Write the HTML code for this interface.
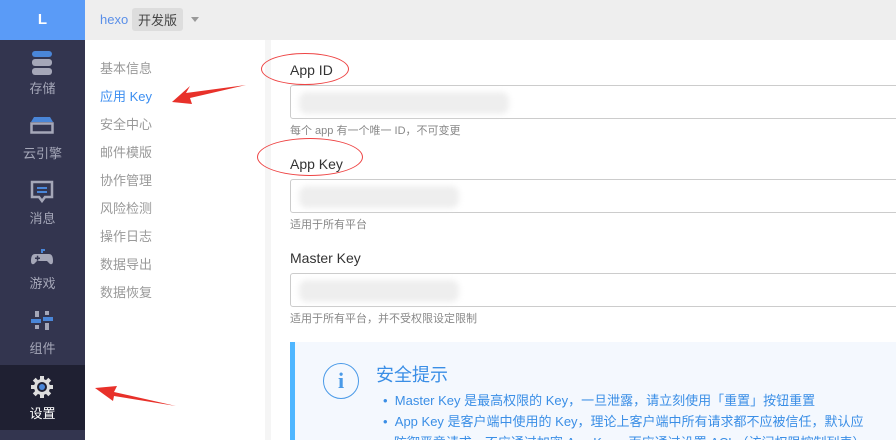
<!DOCTYPE html><html><head><meta charset="utf-8"><style>
*{margin:0;padding:0;box-sizing:border-box}
html,body{width:896px;height:440px;overflow:hidden}
body{position:relative;background:#fff;font-family:"Liberation Sans","Noto Sans CJK SC",sans-serif}
.side{position:absolute;left:0;top:0;width:85px;height:440px;background:#33354f}
.logo{height:40px;background:#5a9bf7;color:#fff;font-weight:bold;font-size:15px;text-align:center;line-height:40px}
.it{position:absolute;left:0;width:85px;height:65px;text-align:center;color:#a5a7b8;font-size:13px}
.it svg{position:absolute;left:30px;top:10px}
.it span{position:absolute;left:0;right:0;top:38px}
.top{position:absolute;left:85px;top:0;right:0;height:40px;background:#eee}
.nav{position:absolute;left:100px;top:55px;font-size:13px;color:#999;line-height:28px}
.strip{position:absolute;left:265px;top:40px;width:6px;height:400px;background:#f5f5f5}
.lbl{position:absolute;left:290px;font-size:14px;color:#333}
.inp{position:absolute;left:290px;width:620px;height:34px;border:1px solid #ccc;border-radius:3px}
.blur{position:absolute;left:8px;top:6px;height:22px;background:#eee;border-radius:8px;filter:blur(3px)}
.help{position:absolute;left:290px;font-size:11px;color:#888}
.ov{position:absolute;border:1px solid #e44;border-radius:50%}
</style></head><body>
<div class="side"><div class="logo">L</div>
<div class="it" style="top:40px"><svg width="24" height="26"><rect x="2" y="1" width="20" height="6" rx="3" fill="#4a86d8"/><rect x="2" y="9" width="20" height="7" rx="3" fill="#a5a7b8"/><rect x="2" y="18" width="20" height="7" rx="3" fill="#a5a7b8"/></svg><span>存储</span></div>
<div class="it" style="top:105px"><svg width="24" height="26"><path d="M4 2h16l3 5H1z" fill="#4a86d8"/><rect x="1.5" y="8.5" width="21" height="9" fill="none" stroke="#a5a7b8" stroke-width="2.5"/></svg><span>云引擎</span></div>
<div class="it" style="top:170px"><svg width="24" height="26"><path d="M2 2h20v15h-7l-3 4-3-4H2z" fill="none" stroke="#a5a7b8" stroke-width="2.5"/><rect x="7" y="7" width="10" height="2" fill="#4a86d8"/><rect x="7" y="11" width="10" height="2" fill="#4a86d8"/></svg><span>消息</span></div>
<div class="it" style="top:235px"><svg width="24" height="26"><path d="M12 8v-3h3" stroke="#4a86d8" stroke-width="2" fill="none"/><path d="M5 9h14q4 0 4 7q0 4-3 3l-3-3H7l-3 3q-3 1-3-3q0-7 4-7z" fill="#a5a7b8"/><rect x="5" y="12.5" width="5" height="1.5" fill="#33354f"/><rect x="6.8" y="10.7" width="1.5" height="5" fill="#33354f"/></svg><span>游戏</span></div>
<div class="it" style="top:300px"><svg width="24" height="26"><rect x="5" y="1" width="4" height="6" fill="#a5a7b8"/><rect x="15" y="1" width="4" height="4" fill="#a5a7b8"/><rect x="1" y="9" width="10" height="4" fill="#4a86d8"/><rect x="13" y="7" width="10" height="4" fill="#4a86d8"/><rect x="5" y="15" width="4" height="4" fill="#a5a7b8"/><rect x="15" y="13" width="4" height="7" fill="#a5a7b8"/></svg><span>组件</span></div>
<div class="it" style="top:365px;background:#1f2032;color:#fff"><svg width="24" height="26"><g transform="translate(12 12)" fill="#ddd"><circle r="8"/><rect x="-2" y="-11" width="4" height="22"/><rect x="-2" y="-11" width="4" height="22" transform="rotate(45)"/><rect x="-2" y="-11" width="4" height="22" transform="rotate(90)"/><rect x="-2" y="-11" width="4" height="22" transform="rotate(135)"/><circle r="5" fill="#1f2032"/><circle r="3" fill="#4a86d8"/></g></svg><span>设置</span></div>
</div>
<div class="top"><span style="position:absolute;left:15px;top:12px;font-size:13px;color:#5a8fe8">hexo</span><span style="position:absolute;left:47px;top:8px;background:#ddd;border-radius:3px;padding:2px 6px;font-size:13px;color:#444">开发版</span><span style="position:absolute;left:106px;top:17px;border:4px solid transparent;border-top:5px solid #999"></span></div>
<div class="nav">基本信息<br><span style="color:#3c8ef0">应用 Key</span><br>安全中心<br>邮件模版<br>协作管理<br>风险检测<br>操作日志<br>数据导出<br>数据恢复</div>
<div class="strip"></div>
<div class="lbl" style="top:62px">App ID</div>
<div class="inp" style="top:85px"><div class="blur" style="width:210px"></div></div>
<div class="help" style="top:122px">每个 app 有一个唯一 ID，不可变更</div>
<div class="lbl" style="top:156px">App Key</div>
<div class="inp" style="top:179px"><div class="blur" style="width:160px"></div></div>
<div class="help" style="top:216px">适用于所有平台</div>
<div class="lbl" style="top:250px">Master Key</div>
<div class="inp" style="top:273px"><div class="blur" style="width:160px"></div></div>
<div class="help" style="top:310px">适用于所有平台，并不受权限设定限制</div>
<div class="ov" style="left:261px;top:53px;width:88px;height:32px"></div>
<div class="ov" style="left:257px;top:138px;width:106px;height:38px"></div>
<div style="position:absolute;left:290px;top:342px;width:620px;height:98px;overflow:hidden;background:#f4f8fe;border-left:5px solid #4fb6ff">
<div style="position:absolute;left:28px;top:21px;width:36px;height:36px;border:1.5px solid #4a9ae8;border-radius:50%;color:#4a9ae8;font-family:'Liberation Serif',serif;font-weight:bold;font-size:22px;text-align:center;line-height:34px">i</div>
<div style="position:absolute;left:81px;top:19px;font-size:18px;color:#3a8ee6">安全提示</div>
<div style="position:absolute;left:88px;top:48px;font-size:13px;color:#3a8ee6;line-height:21px;white-space:nowrap">• &nbsp;Master Key 是最高权限的 Key，一旦泄露，请立刻使用「重置」按钮重置<br>• &nbsp;App Key 是客户端中使用的 Key，理论上客户端中所有请求都不应被信任，默认应<br>&nbsp;&nbsp;&nbsp;防御恶意请求，不应通过加密 App Key，而应通过设置 ACL（访问权限控制列表）</div>
</div>
<svg style="position:absolute;left:0;top:0" width="896" height="440"><path d="M246 85L186 93l4-7-18 16 20 2-2-6z" fill="#e8312a"/><path d="M176 406L114 392l3-6-22 2 18 13 1-5z" fill="#e8312a"/></svg>
</body></html>
